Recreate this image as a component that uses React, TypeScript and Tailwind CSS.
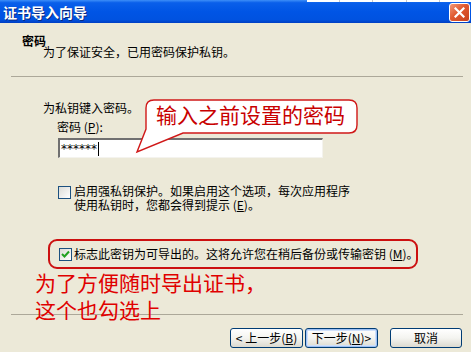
import React from "react";

const font = { fontFamily: '"Noto Sans CJK SC", "Noto Sans", sans-serif' };

function Acc({ k }: { k: string }) {
  return (
    <span>
      (<span className="underline underline-offset-1">{k}</span>)
    </span>
  );
}

function CheckBox({ checked }: { checked?: boolean }) {
  return (
    <div className="w-[13px] h-[13px] shrink-0 border border-[#1c5180] bg-gradient-to-br from-[#dcdcd7] to-[#ffffff] flex items-center justify-center">
      {checked && (
        <svg width="9" height="9" viewBox="0 0 9 9">
          <path d="M1 4 L3.5 6.5 L8 1.5" fill="none" stroke="#21a121" strokeWidth="2" />
        </svg>
      )}
    </div>
  );
}

function XPButton({ children, focused }: { children: React.ReactNode; focused?: boolean }) {
  return (
    <div
      className={
        "h-[20px] flex items-center justify-center whitespace-nowrap rounded-[3px] border border-[#003c74] bg-gradient-to-b from-[#ffffff] via-[#f4f4f0] to-[#dcdad0] text-[12px] leading-[12px] text-black " +
        (focused ? "shadow-[inset_0_0_0_1px_#9dc0f4,inset_0_0_0_2px_#cfe0fa]" : "")
      }
    >
      {children}
    </div>
  );
}

export default function App() {
  return (
    <div className="relative w-[471px] h-[352px] overflow-hidden bg-[#ece9d8] flex flex-col text-black" style={font}>
      {/* title bar */}
      <div className="h-[23px] shrink-0 flex items-center justify-between pl-[3px] pr-[1px] bg-[linear-gradient(to_bottom,#3d8ef8_0%,#0a5fea_12%,#0055e5_50%,#0052e0_85%,#003fc2_100%)]">
        <span className="text-[14px] leading-[16px] font-bold text-white [text-shadow:1px_1px_0_#0a2a80]">证书导入向导</span>
        <div className="w-[21px] h-[19px] mt-[1px] rounded-[3px] border border-white bg-[linear-gradient(to_bottom_right,#f29a7a_0%,#e0592f_45%,#c8401c_100%)] flex items-center justify-center">
          <svg width="11" height="11" viewBox="0 0 11 11">
            <path d="M1.5 1.5 L9.5 9.5 M9.5 1.5 L1.5 9.5" stroke="white" strokeWidth="2.2" strokeLinecap="square" />
          </svg>
        </div>
      </div>

      {/* header */}
      <div className="pl-[22px] pt-[12px]">
        <div className="text-[12px] leading-[11px] font-bold">密码</div>
        <div className="pl-[21px] text-[12px] leading-[12px]">为了保证安全，已用密码保护私钥。</div>
      </div>
      <div className="mt-[18px] ml-[11px] mr-[8px] h-px bg-[#aca899]" />

      {/* body */}
      <div className="pl-[43px] mt-[25px] text-[12px] leading-[12px]">为私钥键入密码。</div>
      <div className="pl-[57px] mt-[7px] text-[12px] leading-[12px]">
        密码 <Acc k="P" />:
      </div>
      <div className="ml-[58px] mt-[5px] w-[265px] h-[20px] bg-white border-t-2 border-l-2 border-t-[#707070] border-l-[#707070] border-b border-r border-b-[#f4f3ee] border-r-[#f4f3ee] flex items-center pl-[1px]">
        <span className="text-[12px] leading-[12px]" style={{ fontFamily: '"DejaVu Sans", sans-serif' }}>
          ******
        </span>
        <div className="w-px h-[14px] bg-black ml-[1px]" />
      </div>

      <div className="ml-[58px] mt-[26px] flex items-start gap-[3px] text-[12px] leading-[14px]">
        <div className="mt-[2px]">
          <CheckBox />
        </div>
        <div className="whitespace-nowrap">
          <div>启用强私钥保护。如果启用这个选项，每次应用程序</div>
          <div>
            使用私钥时，您都会得到提示 <Acc k="E" />。
          </div>
        </div>
      </div>

      <div className="ml-[48px] mt-[27px] w-[370px] h-[30px] rounded-[9px] border-2 border-[#cc1010] flex items-center pl-[9px] gap-[2px] text-[12px] leading-[12px]">
        <CheckBox checked />
        <span className="whitespace-nowrap">
          标志此密钥为可导出的。这将允许您在稍后备份或传输密钥 <Acc k="M" />。
        </span>
      </div>

      <div className="mt-[45px] ml-[11px] mr-[8px] h-px bg-[#aca899]" />

      <div className="mt-[13px] flex justify-end pr-[9px]">
        <div className="flex gap-[2px]">
          <div className="w-[73px]">
            <XPButton>
              &lt; 上一步 <Acc k="B" />
            </XPButton>
          </div>
          <div className="w-[73px]">
            <XPButton focused>
              下一步 <Acc k="N" /> &gt;
            </XPButton>
          </div>
        </div>
        <div className="w-[72px] ml-[12px]">
          <XPButton>取消</XPButton>
        </div>
      </div>

      {/* strip of window behind, top-right */}
      <div className="absolute left-[307px] top-0 w-[164px] h-[2px] bg-white flex">
        <div className="w-[33px] h-full border-r border-[#c8c8c8]" />
        <div className="w-[33px] h-full border-r border-[#c8c8c8]" />
        <div className="w-[34px] h-full border-r border-[#c8c8c8]" />
        <div className="w-[33px] h-full border-r border-[#c8c8c8]" />
      </div>

      {/* callout annotation */}
      <svg className="absolute left-0 top-0 pointer-events-none" width="471" height="352">
        <path
          d="M154 100 H349 Q357 100 357 108 V125 Q357 133 349 133 H183 L137 152 L146 129 V108 Q146 100 154 100 Z"
          fill="white"
          stroke="#d01818"
          strokeWidth="1.4"
        />
      </svg>
      <div className="absolute left-[156px] top-[102px] text-[21px] leading-[24px] text-[#c80000]">输入之前设置的密码</div>

      {/* bottom red annotation */}
      <div className="absolute left-[35px] top-[269px] text-[21px] leading-[27px] text-[#e00000]">
        <div>为了方便随时导出证书，</div>
        <div>这个也勾选上</div>
      </div>
    </div>
  );
}
